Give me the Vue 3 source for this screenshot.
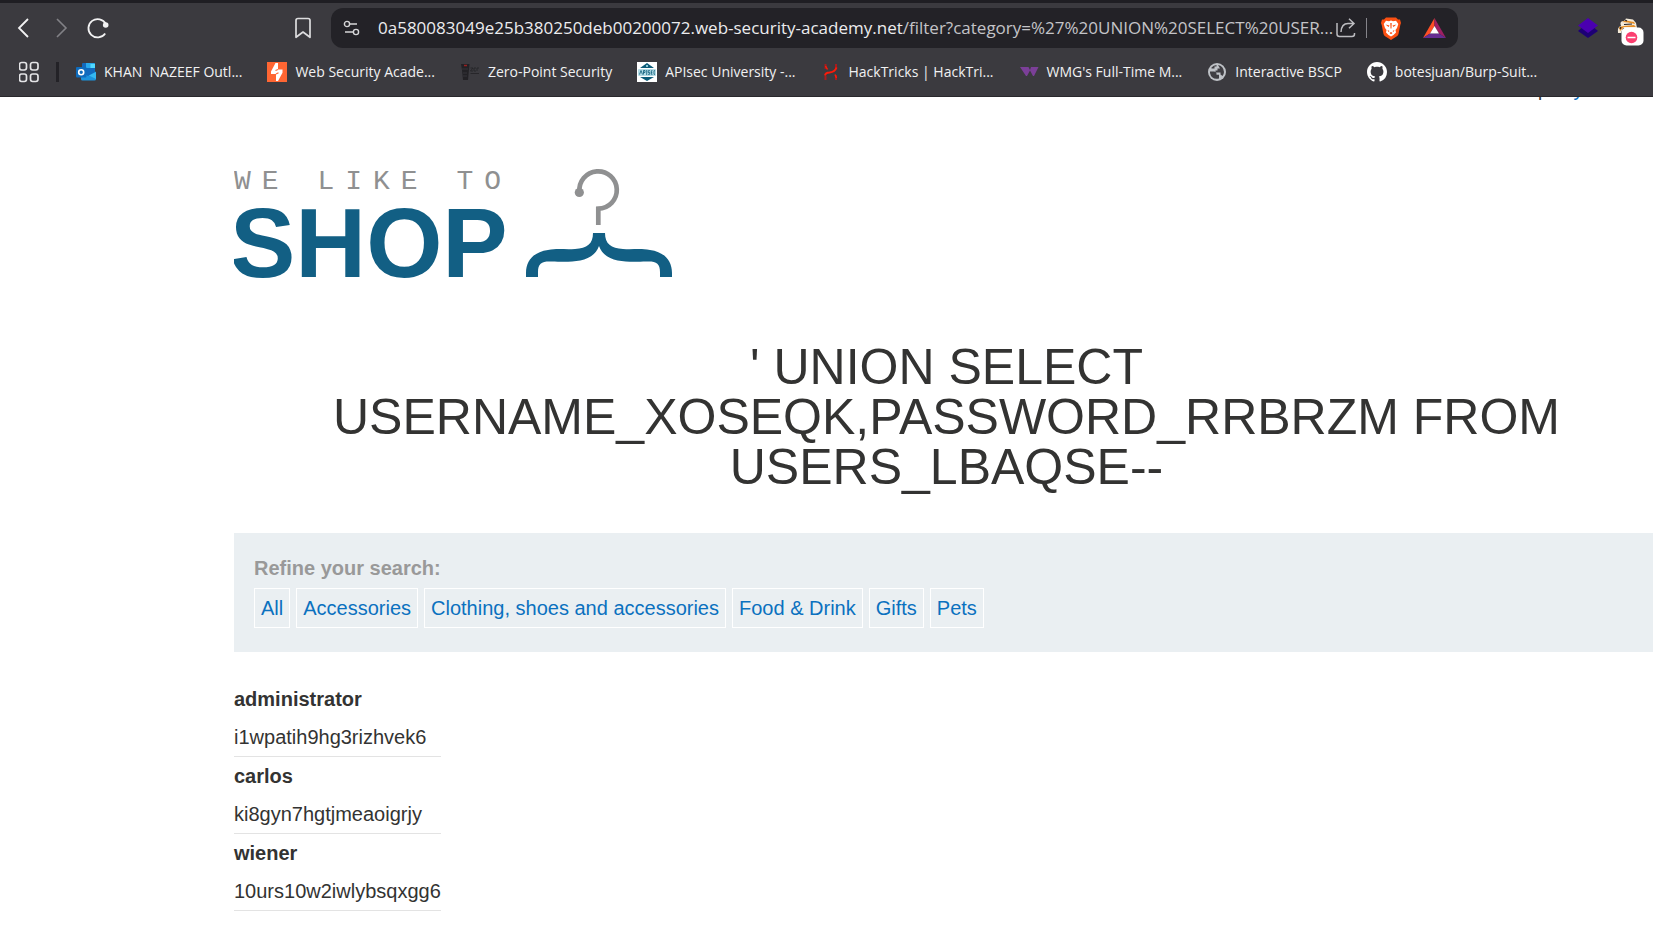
<script setup>
const bookmarks = [
  { icon: 'outlook', label: 'KHAN  NAZEEF Outl...' },
  { icon: 'burp', label: 'Web Security Acade...' },
  { icon: 'zero', label: 'Zero-Point Security' },
  { icon: 'apisec', label: 'APIsec University -...' },
  { icon: 'hack', label: 'HackTricks | HackTri...' },
  { icon: 'wmg', label: "WMG's Full-Time M..." },
  { icon: 'globe', label: 'Interactive BSCP' },
  { icon: 'github', label: 'botesjuan/Burp-Suit...' },
]
const filters = ['All', 'Accessories', 'Clothing, shoes and accessories', 'Food & Drink', 'Gifts', 'Pets']
const users = [
  { name: 'administrator', secret: 'i1wpatih9hg3rizhvek6' },
  { name: 'carlos', secret: 'ki8gyn7hgtjmeaoigrjy' },
  { name: 'wiener', secret: '10urs10w2iwlybsqxgg6' },
]
</script>

<template>
  <div class="window">
    <header class="chrome">
      <div class="toolbar">
        <div class="nav-buttons">
          <button type="button" aria-label="Back">
            <svg width="22" height="22" viewBox="0 0 22 22"><path d="M15 2 L6 11 L15 20" fill="none" stroke="#f2f2f3" stroke-width="1.8" /></svg>
          </button>
          <button type="button" aria-label="Forward">
            <svg width="22" height="22" viewBox="0 0 22 22"><path d="M7 2 L16 11 L7 20" fill="none" stroke="#828186" stroke-width="1.6" /></svg>
          </button>
          <button type="button" aria-label="Reload">
            <svg width="22" height="22" viewBox="0 0 22 22"><path d="M18.2 16.5 A9.200 9.200 0 1 1 18.8 7" fill="none" stroke="#f2f2f3" stroke-width="1.8" /><circle cx="18.700" cy="8" r="2.800" fill="#f2f2f3" /></svg>
          </button>
        </div>
        <button type="button" class="save" aria-label="Bookmark this page">
          <svg width="18" height="22" viewBox="0 0 18 22"><path d="M2 3.5 Q2 1.5 4 1.5 H14 Q16 1.5 16 3.5 V20.3 L9 15 L2 20.3 Z" fill="none" stroke="#dddddf" stroke-width="1.7" stroke-linejoin="round" /></svg>
        </button>
        <div class="address">
          <button type="button" class="site" aria-label="Site settings">
            <svg width="18" height="16" viewBox="0 0 18 16"><g fill="none" stroke="#d6d6d8" stroke-width="1.4"><circle cx="4" cy="4" r="2.6" /><path d="M6.6 4 H14 M2 12 H10.4" /><circle cx="13" cy="12" r="2.6" /></g></svg>
          </button>
          <div class="url"><span class="host">0a580083049e25b380250deb00200072.web-security-academy.net</span>/filter?category=%27%20UNION%20SELECT%20USER...</div>
          <button type="button" class="share" aria-label="Share">
            <svg width="22" height="20" viewBox="0 0 22 20"><g fill="none" stroke="#bcbcc0" stroke-width="1.5"><path d="M2 5 V16 Q2 18.5 4.500 18.500 H17 Q19.500 18.500 19.500 16 V15" /><path d="M6 14 Q6.500 5.500 13 5.500 H19 M14 0.800 L19 5.500 L14 10.300" /></g></svg>
          </button>
          <span class="rule"></span>
          <button type="button" class="shield" aria-label="Brave Shields">
            <svg width="20" height="23" viewBox="0 0 20 23"><path d="M5 0.500 H15 L17 2.500 L19 2.500 L20 6 L19.300 8 L17.500 17 Q17 18.500 15.500 19.500 L10 23 L4.500 19.500 Q3 18.500 2.500 17 L0.700 8 L0 6 L1 2.500 L3 2.500 Z" fill="#fb5012" /><path d="M5 3.800 L8 4.300 L10 3.600 L12 4.300 L15 3.800 L17.300 7 L16 11 L14.500 13 L15 15.500 L12.500 18 L10 19.500 L7.500 18 L5 15.500 L5.500 13 L4 11 L2.700 7 Z" fill="#fff" /><path d="M4.500 7.500 L8.500 8.500 L7.500 10 Z M15.500 7.500 L11.500 8.500 L12.500 10 Z M9.300 6 H10.700 L10.500 11.500 H9.500 Z M6.500 13 L8.500 14 L7.500 15 Z M13.500 13 L11.500 14 L12.500 15 Z M8.500 16 L10 15 L11.500 16 L10 17.300 Z" fill="#fb5012" /></svg>
          </button>
          <button type="button" class="rewards" aria-label="Brave Rewards">
            <svg width="23" height="20" viewBox="0 0 23 20"><path d="M11.500 0 L0 20 L7 15.500 L11.500 8 Z" fill="#ff4f26" /><path d="M11.500 0 L23 20 L16 15.500 L11.500 8 Z" fill="#9e1f63" /><path d="M0 20 H23 L16 15.500 H7 Z" fill="#662d91" /><path d="M11.500 8 L16 15.500 H7 Z" fill="#fff" /></svg>
          </button>
        </div>
        <div class="extensions">
          <button type="button" aria-label="Layers extension">
            <svg width="20" height="20" viewBox="0 0 20 20"><path d="M0 13 L4 9.500 H16 L20 13 L10 20 Z" fill="#1d0075" /><path d="M10 0 L20 7.500 L10 15 L0 7.500 Z" fill="#4a00b0" /></svg>
          </button>
          <button type="button" aria-label="Cookie extension, blocked">
            <svg width="27" height="36" viewBox="0 -7 27 36"><path d="M1 16 Q0 10 4 9 Q2 4 7 4 L9 1.500 L16 2.500 L19 6 L20 11 H6 L4 16 Z" fill="#f4ead9" /><path d="M5 5 L9 3.500 L17 5 L18 7 L11 5.500 Z M2 10 L7 9 L17 8 L19 10 H7 L3 14 Z" fill="#e58d25" /><path d="M7 7.500 L15 7 M3 12 L4 10 M8 3 L10 4" stroke="#252126" stroke-width="1.200" /><rect x="4.500" y="10.500" width="22" height="18" rx="5" fill="#fff" /><circle cx="14.500" cy="20.500" r="5.800" fill="#fb3f70" /><path d="M10.500 20.500 H18.500" stroke="#fff" stroke-width="1.500" /></svg>
          </button>
        </div>
      </div>

      <nav class="bookmarks" aria-label="Bookmarks">
        <button type="button" class="grid" aria-label="All bookmarks">
          <svg width="20" height="22" viewBox="0 0 20 22"><g fill="none" stroke="#e4e4e6" stroke-width="1.700"><rect x="0.500" y="1.500" width="7" height="7.500" rx="2.200" /><rect x="11.500" y="1.500" width="7.500" height="7.500" rx="2.200" /><rect x="0.500" y="13" width="7" height="7.500" rx="2.200" /><rect x="11.500" y="13" width="7.500" height="7.500" rx="2.200" /></g></svg>
        </button>
        <span class="divider"></span>
        <a v-for="b in bookmarks" :key="b.label" href="#" class="bookmark">
          <svg v-if="b.icon === 'outlook'" width="20" height="20" viewBox="0 0 20 20"><rect x="6" y="1" width="13" height="13" rx="1" fill="#1269bd" /><path d="M10 1 H18 Q19 1 19 2 V6 H10 Z" fill="#28a8ea" /><path d="M14.500 2 H19 V6 H14.500 Z" fill="#50d9ff" /><path d="M5 10 L12 14 L20 9.500 V17 Q20 18.500 18.500 18.500 H6.500 Q5 18.500 5 17 Z" fill="#1c93dd" /><path d="M20 10 V17 L13 13.500 Z" fill="#35b8f1" /><rect x="0" y="5" width="10.500" height="10.500" rx="1" fill="#0f6cbd" /><circle cx="5.200" cy="10.200" r="2.500" fill="none" stroke="#fff" stroke-width="1.600" /></svg>
          <svg v-else-if="b.icon === 'burp'" width="20" height="20" viewBox="0 0 20 20"><path d="M0 0 H20 V20 H0 Z" fill="#ff6633" /><path d="M8.500 1 H11 V7.500 H15.500 V10.800 L11 19 H9 V12 H4 V9.500 Z" fill="#fff" /><path d="M11 7.500 L8.500 8.500 M9 12 L11.500 10.800" stroke="#ff6633" stroke-width="1.200" /></svg>
          <svg v-else-if="b.icon === 'zero'" width="20" height="20" viewBox="0 0 20 20"><path d="M1 2 H9.500 L8 18 H3 L2 8 Z" fill="#222125" /><path d="M4 3.500 H7" stroke="#9a2022" stroke-width="1.500" /><path d="M2 7 H8 M3 11 H7 M3 14 H7" stroke="#3b3a3f" stroke-width="0.800" /><path d="M10.500 6 H13 L10.500 9 H13 M16 6 H14 V9 H16 M17 9 V6 H19 M10.500 11.500 H19" stroke="#27262a" stroke-width="1" fill="none" /></svg>
          <svg v-else-if="b.icon === 'apisec'" width="20" height="20" viewBox="0 0 20 20"><rect width="20" height="20" fill="#fff" /><path d="M3 6 L10 1 L17 6 Z M3 15 L10 19 L17 15 Z" fill="#0b5b78" /><circle cx="10" cy="4" r="1" fill="#b5e4ee" /><rect x="1" y="7" width="18" height="7" rx="1" fill="#b3dce6" /><path d="M2.500 12.500 L4 8.500 L5.500 12.500 M6.500 12.500 V8.500 H8 V10.500 H6.500 M9.700 8 V13 M13 8.700 H11.200 V10.500 H12.700 V12.300 H11 M15.500 8.700 H14.300 V12.300 H15.500 M14.300 10.500 H15.300 M18 8.700 H17 V12.300 H18" fill="none" stroke="#0b5b78" stroke-width="0.800" /></svg>
          <svg v-else-if="b.icon === 'hack'" width="20" height="20" viewBox="0 0 20 20"><path d="M4.500 2 V7 M4.500 14 V18 M15 2 V6 M15 13 V18" stroke="#a81c1d" stroke-width="2" /><path d="M4 13.500 Q4.500 10.500 8.500 10.500 Q14 10 15.500 5.500" fill="none" stroke="#ff1a08" stroke-width="2" /><path d="M4.500 4 L6.500 7.500 M14 12.500 L15.500 16" stroke="#ff1a08" stroke-width="1.500" /></svg>
          <svg v-else-if="b.icon === 'wmg'" width="20" height="20" viewBox="0 0 20 20"><path d="M1 5 H9.500 L11 8 L12 5 H19.500 L15 14 H14 L11 8.500 L8 14 H7 Z" fill="#7b3f98" /></svg>
          <svg v-else-if="b.icon === 'globe'" width="20" height="20" viewBox="0 0 20 20"><circle cx="10" cy="10" r="9" fill="#bec1c6" /><path d="M3 9.500 H7 Q9.500 9.500 9.500 12 V12.800 H12 V16.500 Q4.500 18 3 11 Z" fill="#3f3e43" /><path d="M11 3 Q16.500 4 17 10 Q17 12 15.500 14 L13.500 12.500 V10.500 H8.500 V8.500 H10.500 V6.500 H13 Z" fill="#3f3e43" /><path d="M4.500 5.500 Q6.500 3.200 9.500 3 V4.500 H7.500 V6.500 H4.500 Z" fill="#3f3e43" /></svg>
          <svg v-else width="20" height="20" viewBox="0 0 16 16"><path fill="#fff" d="M8 0C3.580 0 0 3.580 0 8c0 3.540 2.290 6.530 5.470 7.590.4.070.55-.17.55-.38 0-.19-.01-.82-.01-1.490-2.010.37-2.530-.49-2.690-.94-.09-.23-.48-.94-.82-1.130-.28-.15-.68-.52-.01-.53.63-.01 1.080.58 1.230.82.72 1.210 1.870.87 2.330.66.070-.52.28-.87.51-1.070-1.780-.2-3.640-.89-3.640-3.950 0-.87.31-1.590.82-2.150-.08-.2-.36-1.020.08-2.120 0 0 .67-.21 2.200.82.64-.18 1.320-.27 2-.27s1.360.09 2 .27c1.530-1.040 2.200-.82 2.200-.82.44 1.100.16 1.920.08 2.120.51.56.82 1.270.82 2.150 0 3.070-1.870 3.750-3.650 3.950.29.25.54.73.54 1.480 0 1.070-.01 1.930-.01 2.200 0 .21.15.46.55.38A8.010 8.010 0 0 0 16 8c0-4.420-3.580-8-8-8z" /></svg>
          <span class="label">{{ b.label }}</span>
        </a>
      </nav>
    </header>

    <main class="page">
      <nav class="account" aria-label="Account">
        <span>|</span>
        <a href="#">My account</a>
      </nav>

      <a href="#" class="logo">
        <svg width="440" height="114" viewBox="0 0 440 114">
          <text class="tagline" x="0" y="24">WE LIKE TO</text>
          <text class="shop" x="-4" y="112">SHOP</text>
          <path d="M345.500 27 A18.700 18.700 0 1 1 364.300 43.700 V60" fill="none" stroke="#8f9091" stroke-width="4.700" />
          <circle cx="345.300" cy="27.500" r="4.600" fill="#8f9091" />
          <path transform="translate(292 3)" d="M67 65 H79 C79 76 85 80 97 81 C107 82 113 80 124 82 C138 84 146 92 146 105 V109 H134 V104 C134 95 130 93 120 93.500 C105 94 79 96 73 78 C67 96 41 94 26 93.500 C16 93 12 95 12 104 V109 H0 V105 C0 92 8 84 22 82 C33 80 39 82 49 81 C61 80 67 76 67 65 Z" fill="#125f84" />
        </svg>
      </a>

      <h1>' UNION SELECT USERNAME_XOSEQK,PASSWORD_RRBRZM FROM USERS_LBAQSE--</h1>

      <section class="search">
        <p id="refine">Refine your search:</p>
        <nav class="filters" aria-labelledby="refine">
          <a v-for="f in filters" :key="f" href="#">{{ f }}</a>
        </nav>
      </section>

      <table class="results">
        <tbody>
          <template v-for="u in users" :key="u.name">
            <tr><th scope="row">{{ u.name }}</th></tr>
            <tr><td>{{ u.secret }}</td></tr>
          </template>
        </tbody>
      </table>
    </main>
  </div>
</template>

<style>
body {
  background: #fff;
}
</style>

<style scoped>
.window {
  min-height: 100vh;
  overflow: hidden;
  font-family: "Liberation Sans", Arial, sans-serif;
  font-size: 20px;
  color: #333332;
}
a {
  color: inherit;
  text-decoration: none;
}
button {
  display: flex;
  flex: none;
  padding: 0;
  border: 0;
  background: none;
}
svg {
  display: block;
  flex: none;
}

/* Browser frame */
.chrome {
  position: relative;
  background: #3b3a3f;
  border-top: 3px solid #1f1e23;
  border-bottom: 1px solid #29282c;
  font-family: "Open Sans", "Noto Sans", sans-serif;
  color: #f1f1f2;
}
.toolbar {
  display: flex;
  align-items: center;
  padding: 5px 9px 0 13px;
}
.nav-buttons {
  display: flex;
  gap: 15px;
}
.save {
  margin: 0 19px 0 185px;
}
.address {
  display: flex;
  flex: 1;
  align-items: center;
  box-sizing: border-box;
  min-width: 0;
  height: 40px;
  padding: 0 12px;
  border-radius: 12px;
  background: #232227;
}
.site {
  margin-right: 17px;
}
.url {
  flex: 1;
  min-width: 0;
  overflow: hidden;
  white-space: nowrap;
  font-size: 17px;
  line-height: 36px;
  color: #c4c4c7;
}
.host {
  color: #ececee;
}
.rule {
  width: 1px;
  height: 20px;
  margin: 0 14px 0 9px;
  background: #85848a;
}
.rewards {
  margin-left: 22px;
}
.extensions {
  display: flex;
  align-items: center;
  gap: 19px;
  height: 40px;
  margin-left: 120px;
}
.bookmarks {
  display: flex;
  align-items: center;
  height: 48px;
  padding-left: 19px;
  font-size: 14px;
  white-space: pre;
}
.divider {
  width: 3px;
  height: 20px;
  margin: 0 17px;
  background: #232227;
}
.bookmark {
  display: flex;
  align-items: center;
  gap: 8px;
  margin-right: 25px;
}
.label {
  padding-bottom: 2px;
}

/* Shop page */
.page {
  overflow: hidden;
  margin-right: -6px;
  padding-left: 234px;
}
.account {
  display: flex;
  justify-content: flex-end;
  gap: 14px;
  margin-top: -20px;
  line-height: 24px;
}
.account a {
  color: #0b71bf;
}
.logo {
  display: block;
  width: fit-content;
  margin-top: 64px;
}
.tagline {
  font-family: "Liberation Mono", monospace;
  font-size: 28px;
  letter-spacing: 11px;
  fill: #8f9091;
}
.shop {
  font-size: 98px;
  font-weight: 700;
  fill: #125f84;
}
h1 {
  margin: 63px 0 41px;
  padding: 0 90px;
  font-size: 50px;
  line-height: 50px;
  font-weight: 400;
  text-align: center;
}
.search {
  padding: 20px 20px 24px;
  background: #eaeff2;
}
.search p {
  margin: 0 0 5px;
  line-height: 30px;
  font-weight: 700;
  color: #999;
}
.filters {
  display: flex;
  gap: 6px;
}
.filters a {
  padding: 0 6px;
  border: 1px solid #fff;
  line-height: 38px;
  color: #0b71bf;
}
.results {
  margin-top: 28px;
  border-collapse: collapse;
}
.results th,
.results td {
  padding: 0;
  text-align: left;
  line-height: 38px;
}
.results td {
  border-bottom: 1px solid #e3e3e3;
}
</style>
